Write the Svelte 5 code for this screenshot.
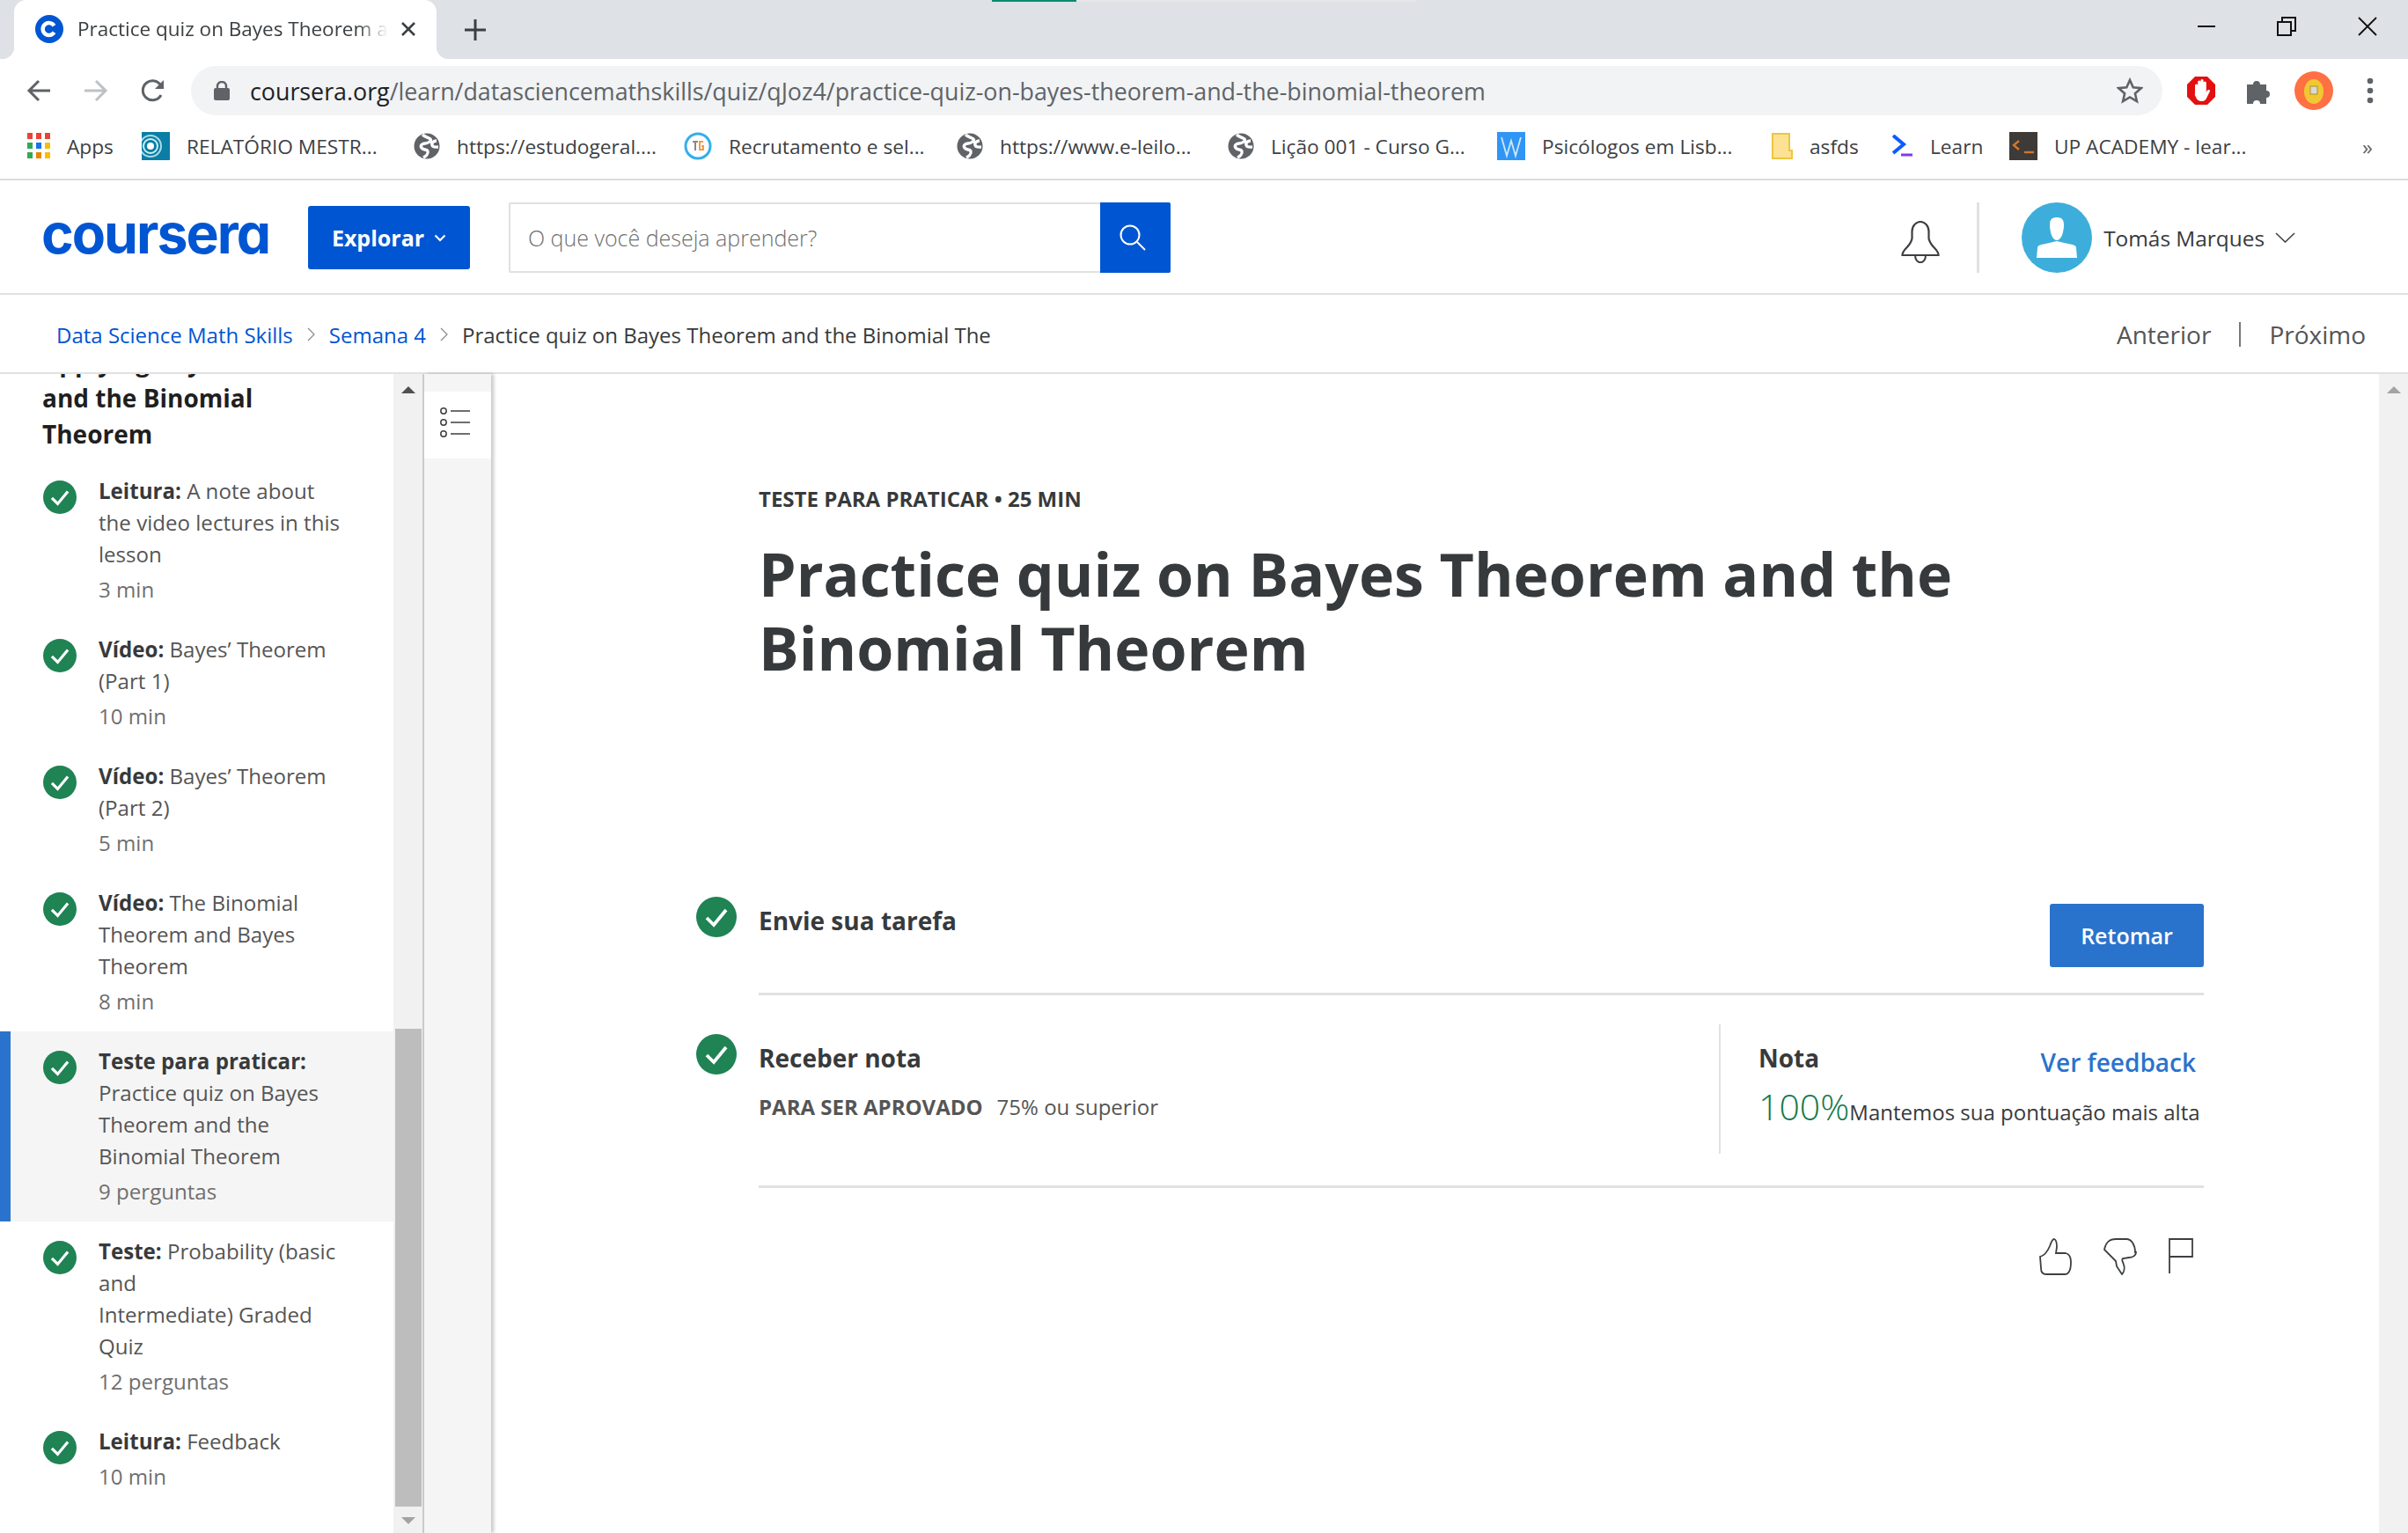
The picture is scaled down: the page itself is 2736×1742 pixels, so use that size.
<script lang="ts">
	const bookmarks = [
		{ label: 'Apps', icon: 'apps', width: 130 },
		{ label: 'RELATÓRIO MESTR...', icon: 'rel', width: 309 },
		{ label: 'https://estudogeral....', icon: 'globe', width: 307 },
		{ label: 'Recrutamento e sel...', icon: 'tg', width: 310 },
		{ label: 'https://www.e-leilo...', icon: 'globe', width: 308 },
		{ label: 'Lição 001 - Curso G...', icon: 'globe', width: 306 },
		{ label: 'Psicólogos em Lisb...', icon: 'w', width: 312 },
		{ label: 'asfds', icon: 'folder', width: 137 },
		{ label: 'Learn', icon: 'learn', width: 133 },
		{ label: 'UP ACADEMY - lear...', icon: 'up', width: 300 }
	];

	const lessons = [
		{ kind: 'Leitura:', lines: ['A note about', 'the video lectures in this', 'lesson'], meta: '3 min' },
		{ kind: 'Vídeo:', lines: ['Bayes’ Theorem', '(Part 1)'], meta: '10 min' },
		{ kind: 'Vídeo:', lines: ['Bayes’ Theorem', '(Part 2)'], meta: '5 min' },
		{ kind: 'Vídeo:', lines: ['The Binomial', 'Theorem and Bayes', 'Theorem'], meta: '8 min' },
		{ kind: 'Teste para praticar:', lines: ['', 'Practice quiz on Bayes', 'Theorem and the', 'Binomial Theorem'], meta: '9 perguntas', active: true },
		{ kind: 'Teste:', lines: ['Probability (basic', 'and', 'Intermediate) Graded', 'Quiz'], meta: '12 perguntas' },
		{ kind: 'Leitura:', lines: ['Feedback'], meta: '10 min' }
	];
</script>

{#snippet check(size)}
	<svg class="check" width={size} height={size} viewBox="0 0 46 46">
		<circle cx="23" cy="23" r="23" fill="#1f8354" />
		<path d="M12 24l8 8L34 15" fill="none" stroke="#fff" stroke-width="3.8" />
	</svg>
{/snippet}

{#snippet globe()}
	<svg width="30" height="30" viewBox="0 0 30 30">
		<circle cx="15" cy="15" r="14.5" fill="#5f6368" />
		<path d="M10 2c3 3 7 3 9 5s-3 5-6 5-6 2-4 5 6 1 7 4-3 6-5 7M26 9c-3 0-6 2-5 5s5 2 7 2" fill="none" stroke="#fff" stroke-width="3.4" />
	</svg>
{/snippet}

<div class="page">
	<div class="tabstrip">
		<div class="loadbar"><span></span></div>
		<div class="tab">
			<svg class="favicon" width="32" height="32" viewBox="0 0 32 32">
				<circle cx="16" cy="16" r="16" fill="#0056d2" />
				<path d="M21.5 12.2a7 7 0 1 0 0 7.6" fill="none" stroke="#fff" stroke-width="4.4" />
			</svg>
			<span class="tabtitle">Practice quiz on Bayes Theorem and the Binomial</span>
			<svg width="18" height="18" viewBox="0 0 18 18"><path d="M2 2l14 14M16 2L2 16" stroke="#3c4043" stroke-width="2.6" /></svg>
		</div>
		<svg class="newtab" width="24" height="24" viewBox="0 0 24 24"><path d="M12 0v24M0 12h24" stroke="#3c4043" stroke-width="3" /></svg>
		<div class="winctl">
			<svg width="20" height="20" viewBox="0 0 20 20"><path d="M0 10h20" stroke="#111" stroke-width="2" /></svg>
			<svg width="22" height="22" viewBox="0 0 22 22"><path d="M1 6h15v15H1zM6 6V1h15v15h-5" fill="none" stroke="#111" stroke-width="2" /></svg>
			<svg width="22" height="22" viewBox="0 0 22 22"><path d="M1 1l20 20M21 1L1 21" stroke="#111" stroke-width="1.8" /></svg>
		</div>
	</div>

	<div class="toolbar">
		<svg width="28" height="26" viewBox="0 0 28 26"><path d="M27 13H3M14 2L3 13l11 11" fill="none" stroke="#5f6368" stroke-width="3" /></svg>
		<svg width="28" height="26" viewBox="0 0 28 26"><path d="M1 13h24M14 2l11 11-11 11" fill="none" stroke="#bdc1c6" stroke-width="3" /></svg>
		<svg width="28" height="28" viewBox="0 0 28 28"><path d="M23 19a11 11 0 1 1 0-10.500" fill="none" stroke="#5f6368" stroke-width="3" /><path d="M26 2v10H16z" fill="#5f6368" /></svg>
		<div class="address">
			<svg width="18" height="22" viewBox="0 0 18 22"><path d="M4 9V6a5 5 0 0 1 10 0v3" fill="none" stroke="#5f6368" stroke-width="2.4" /><rect y="8" width="18" height="14" rx="2" fill="#5f6368" /></svg>
			<span class="url"><b>coursera.org</b>/learn/datasciencemathskills/quiz/qJoz4/practice-quiz-on-bayes-theorem-and-the-binomial-theorem</span>
			<svg class="star" width="30" height="30" viewBox="0 0 30 30"><path d="M15 3l3.700 8.300 9 .9-6.800 6 2 8.800L15 22.400 7.100 27l2-8.800-6.800-6 9-.9z" fill="none" stroke="#5f6368" stroke-width="2.600" /></svg>
		</div>
		<div class="exts">
			<svg width="34" height="34" viewBox="0 0 34 34">
				<path d="M10 1h14l9 9v14l-9 9H10l-9-9V10z" fill="#e31010" />
				<path d="M10 19v-8a1.600 1.600 0 0 1 3.200 0v5V7a1.600 1.600 0 0 1 3.200 0v9V5.500a1.600 1.600 0 0 1 3.200 0V16V8a1.600 1.600 0 0 1 3.200 0v11l1-2c1-2 4-1 3 1l-3 6c-1 3-3 5-6 5s-5-1-6-3l-2-4z" fill="#fff" />
			</svg>
			<svg width="30" height="30" viewBox="0 0 30 30"><path d="M2 8h7a4 4 0 1 1 8 0h7v7a4 4 0 1 1 0 8v7h-7a4 4 0 1 0-8 0H2z" fill="#5f6368" /></svg>
			<svg class="orange" width="44" height="44" viewBox="0 0 44 44">
				<circle cx="22" cy="22" r="22" fill="#ff7043" />
				<ellipse cx="22" cy="23" rx="11" ry="14" fill="#f2c832" />
				<rect x="18" y="17" width="8" height="9" fill="#d9d9d9" stroke="#a98f2e" />
			</svg>
			<svg width="8" height="30" viewBox="0 0 8 30"><circle cx="4" cy="4" r="3.300" fill="#5f6368" /><circle cx="4" cy="15" r="3.300" fill="#5f6368" /><circle cx="4" cy="26" r="3.300" fill="#5f6368" /></svg>
		</div>
	</div>

	<div class="bookmarks">
		{#each bookmarks as b (b.label)}
			<div class="bm" style="width:{b.width}px">
				<span class="bmicon">
					{#if b.icon === 'apps'}
						<svg width="26" height="30" viewBox="0 0 26 30">
							{#each ['#ea4335', '#ea4335', '#ea4335', '#34a853', '#1a73e8', '#fbbc04', '#34a853', '#ea8600', '#fbbc04'] as c, i}
								<rect x={(i % 3) * 10} y={Math.floor(i / 3) * 11} width="6" height="7" fill={c} />
							{/each}
						</svg>
					{:else if b.icon === 'rel'}
						<svg width="32" height="32" viewBox="0 0 32 32">
							<rect width="32" height="32" fill="#0a7ea4" />
							<circle cx="10" cy="16" r="12" fill="none" stroke="#a9dcea" stroke-width="2" />
							<circle cx="10" cy="16" r="8" fill="none" stroke="#cfeef5" stroke-width="2" />
							<circle cx="10" cy="16" r="4" fill="#fff" />
						</svg>
					{:else if b.icon === 'globe'}
						{@render globe()}
					{:else if b.icon === 'tg'}
						<svg width="32" height="32" viewBox="0 0 32 32">
							<circle cx="16" cy="16" r="14" fill="#fff" stroke="#35aeea" stroke-width="3" />
							<path d="M10 11h6M13 11v10" stroke="#888" stroke-width="2" /><path d="M22 11h-4v9h4v-4h-2" fill="none" stroke="#f09a4a" stroke-width="2" />
						</svg>
					{:else if b.icon === 'w'}
						<svg width="32" height="32" viewBox="0 0 32 32">
							<rect width="32" height="32" fill="#2f96f5" />
							<path d="M5 6l6 21 5-17 5 17 6-21" fill="none" stroke="#cfe6fb" stroke-width="1.800" />
						</svg>
					{:else if b.icon === 'folder'}
						<svg width="24" height="30" viewBox="0 0 24 30">
							<path d="M1 1h19v19h3v9H1z" fill="#fde293" stroke="#edc53f" stroke-width="2" />
						</svg>
					{:else if b.icon === 'learn'}
						<svg width="24" height="26" viewBox="0 0 24 26">
							<path d="M1 1l12 10L1 21" fill="none" stroke="#0b5cff" stroke-width="4" /><path d="M10 23h13" stroke="#7a3cf0" stroke-width="3" />
						</svg>
					{:else}
						<svg width="32" height="32" viewBox="0 0 32 32">
							<rect width="32" height="32" fill="#3d3a38" />
							<path d="M11 10l-6 5 6 5" fill="none" stroke="#d2762a" stroke-width="2.400" /><path d="M17 23h11" stroke="#d2762a" stroke-width="2.400" />
						</svg>
					{/if}
				</span>
				<span class="bmtext">{b.label}</span>
			</div>
		{/each}
		<span class="more">»</span>
	</div>

	<header class="topbar">
		<span class="logo">coursera</span>
		<button type="button" class="explore">Explorar
			<svg width="14" height="9" viewBox="0 0 14 9"><path d="M1.500 1.500L7 7l5.500-5.500" fill="none" stroke="#fff" stroke-width="2.200" /></svg>
		</button>
		<div class="search">
			<span class="placeholder">O que você deseja aprender?</span>
			<span class="searchbtn">
				<svg width="32" height="32" viewBox="0 0 32 32"><circle cx="13" cy="13" r="10.500" fill="none" stroke="#fff" stroke-width="2" /><path d="M21 21l9 9" stroke="#fff" stroke-width="2" /></svg>
			</span>
		</div>
		<div class="user">
			<svg class="bell" width="44" height="48" viewBox="0 0 44 48">
				<path d="M1.500 39c0-7 9-9 11-19V12a9.500 11 0 0 1 19 0v8c2 10 11 12 11 19z" fill="none" stroke="#3c4043" stroke-width="2.200" />
				<path d="M16 39c0 11 12 11 12 0" fill="none" stroke="#3c4043" stroke-width="2" />
			</svg>
			<span class="userdiv"></span>
			<svg class="avatar" width="80" height="80" viewBox="0 0 80 80">
				<circle cx="40" cy="40" r="40" fill="#3daedb" />
				<path d="M40 17c7 0 8 4 8 9s-2 17-8 17-8-12-8-17 1-9 8-9zM17 63l1-11c0-3 3-4 9-5l13-3 13 3c6 1 9 2 9 5l1 11z" fill="#fff" />
			</svg>
			<span class="username">Tomás Marques</span>
			<svg width="23" height="12" viewBox="0 0 23 12"><path d="M1 1l10.500 10L22 1" fill="none" stroke="#444" stroke-width="1.600" /></svg>
		</div>
	</header>

	<nav class="crumbs">
		<a href="#top">Data Science Math Skills</a>
		<svg width="9" height="18" viewBox="0 0 9 18"><path d="M1 2l7 7-7 7" fill="none" stroke="#888" stroke-width="1.200" /></svg>
		<a href="#top">Semana 4</a>
		<svg width="9" height="18" viewBox="0 0 9 18"><path d="M1 2l7 7-7 7" fill="none" stroke="#888" stroke-width="1.200" /></svg>
		<span class="current">Practice quiz on Bayes Theorem and the Binomial The</span>
		<div class="pager">
			<span>Anterior</span>
			<i></i>
			<span>Próximo</span>
		</div>
	</nav>

	<div class="body">
		<aside class="sidebar">
			<div class="sidelist">
				<h3>Applying Bayes<br />and the Binomial<br />Theorem</h3>
				{#each lessons as l}
					<div class="lesson" class:active={l.active}>
						{@render check(38)}
						<div class="lessontext">
							<p><b>{l.kind}</b>
								{#each l.lines as line, i}{#if i > 0}<br />{/if}{line}{/each}
							</p>
							<p class="meta">{l.meta}</p>
						</div>
					</div>
				{/each}
			</div>
		</aside>
		<div class="scrollbar side">
			<span class="arrow up dark"></span>
			<span class="thumb"></span>
			<span class="arrow down"></span>
		</div>
		<div class="rail">
			<div class="railbtn">
				<svg width="36" height="36" viewBox="0 0 36 36">
					<g fill="none" stroke="#3c4043" stroke-width="1.500">
						<circle cx="4" cy="5" r="3.200" /><circle cx="4" cy="18" r="3.200" /><circle cx="4" cy="31" r="3.200" />
						<path d="M12 5h22M12 18h22M12 31h22" />
					</g>
				</svg>
			</div>
		</div>
		<main class="content">
			<div class="eyebrow">TESTE PARA PRATICAR • 25 MIN</div>
			<h1>Practice quiz on Bayes Theorem and the<br />Binomial Theorem</h1>

			<section class="step first">
				{@render check(46)}
				<div class="stepbody">
					<h2>Envie sua tarefa</h2>
					<button type="button" class="resume">Retomar</button>
				</div>
			</section>

			<section class="step second">
				{@render check(46)}
				<div class="stepbody">
					<div class="grade-left">
						<h2>Receber nota</h2>
						<p class="pass"><b>PARA SER APROVADO</b><span>75% ou superior</span></p>
					</div>
					<div class="grade">
						<div class="graderow top">
							<h2>Nota</h2>
							<a href="#top">Ver feedback</a>
						</div>
						<div class="graderow score">
							<span class="pct">100%</span>
							<span class="keep">Mantemos sua pontuação mais alta</span>
						</div>
					</div>
				</div>
			</section>

			<div class="actions">
				<svg width="38" height="42" viewBox="0 0 38 42"><path d="M2 21c4-1 8-5 11-12 1-3 3-8 5-8 3 1 3 6 3 9l-1 7h11c4 1 6 5 6 10 0 6-1 14-7 14H9c-4 0-6-2-6-7z" fill="none" stroke="#3c4043" stroke-width="1.800" /></svg>
				<svg width="38" height="42" viewBox="0 0 38 42"><path d="M36 16c0-8-4-15-10-15H14C8 1 3 3 1 13l13 13 1 6 6 9c3-3 3-8 2-11-1-4-3-5-1-7l7-1c5 0 8-3 8-6z" fill="none" stroke="#3c4043" stroke-width="1.800" /></svg>
				<svg width="28" height="40" viewBox="0 0 28 40"><path d="M1 40V1h26v20H1" fill="none" stroke="#3c4043" stroke-width="1.800" /></svg>
			</div>
		</main>
		<div class="scrollbar page-bar">
			<span class="arrow up"></span>
		</div>
	</div>
</div>

<style>
	:global(body) {
		margin: 0;
		background: #fff;
	}

	.page {
		position: relative;
		width: 2736px;
		height: 1742px;
		overflow: hidden;
		display: flex;
		flex-direction: column;
		font-family: 'Open Sans', 'Noto Sans', sans-serif;
		color: #373a3c;
	}

	svg {
		display: block;
		flex: none;
	}

	/* browser chrome */
	.tabstrip {
		position: relative;
		flex: none;
		height: 67px;
		background: #dee1e6;
		display: flex;
		align-items: center;
	}

	.loadbar {
		position: absolute;
		top: 0;
		left: 1127px;
		width: 482px;
		height: 2px;
		background: #e6e6e6;
	}

	.loadbar span {
		display: block;
		width: 96px;
		height: 100%;
		background: #0a8a70;
	}

	.tab {
		position: relative;
		box-sizing: border-box;
		align-self: stretch;
		width: 480px;
		margin-left: 16px;
		padding: 0 23px 2px 24px;
		display: flex;
		align-items: center;
		background: #fff;
		border-radius: 14px 14px 0 0;
	}

	.tab::before,
	.tab::after {
		content: '';
		position: absolute;
		bottom: 0;
		width: 14px;
		height: 14px;
	}

	.tab::before {
		left: -14px;
		background: radial-gradient(circle at 0 0, transparent 14px, #fff 14.500px);
	}

	.tab::after {
		right: -14px;
		background: radial-gradient(circle at 100% 0, transparent 14px, #fff 14.500px);
	}

	.tabtitle {
		flex: 1;
		min-width: 0;
		margin: 0 14px 0 16px;
		font-size: 22.500px;
		color: #3c4043;
		white-space: nowrap;
		overflow: hidden;
		-webkit-mask-image: linear-gradient(90deg, #000 90%, transparent 100%);
		mask-image: linear-gradient(90deg, #000 90%, transparent 100%);
	}

	.newtab {
		margin-left: 32px;
	}

	.winctl {
		margin-left: auto;
		margin-right: 35px;
		display: flex;
		align-items: center;
		gap: 70px;
		padding-bottom: 7px;
	}

	.toolbar {
		flex: none;
		height: 72px;
		box-sizing: border-box;
		padding-left: 30px;
		display: flex;
		align-items: center;
		gap: 37px;
	}

	.address {
		box-sizing: border-box;
		width: 2240px;
		height: 56px;
		margin-left: -8px;
		padding: 0 22px 0 26px;
		display: flex;
		align-items: center;
		background: #f1f3f4;
		border-radius: 28px;
	}

	.url {
		margin-left: 23px;
		font-size: 26.800px;
		color: #5f6368;
		white-space: nowrap;
	}

	.url b {
		font-weight: 400;
		color: #202124;
	}

	.star {
		margin-left: auto;
	}

	.exts {
		margin-left: -10px;
		display: flex;
		align-items: center;
		gap: 33px;
	}

	.orange {
		margin: 0 5px 0 -7px;
	}

	.bookmarks {
		flex: none;
		box-sizing: border-box;
		height: 66px;
		padding: 0 0 10px 31px;
		display: flex;
		align-items: center;
		border-bottom: 2px solid #dadce0;
	}

	.bm {
		flex: none;
		display: flex;
		align-items: center;
		gap: 19px;
		font-size: 22.700px;
		color: #3c4043;
		white-space: nowrap;
	}

	.more {
		margin-left: 101px;
		font-size: 24px;
		color: #5f6368;
	}

	/* coursera header */
	.topbar {
		flex: none;
		box-sizing: border-box;
		height: 130px;
		padding: 2px 0 0 47px;
		display: flex;
		align-items: center;
		border-bottom: 2px solid #e1e1e1;
	}

	.logo {
		width: 255px;
		font-family: Inter, sans-serif;
		font-size: 62.500px;
		font-weight: 700;
		font-feature-settings: 'cv11';
		letter-spacing: -2px;
		line-height: 1;
		color: #0056d2;
		padding-bottom: 10px;
	}

	.explore {
		box-sizing: border-box;
		width: 184px;
		height: 72px;
		margin-left: 48px;
		display: flex;
		align-items: center;
		justify-content: center;
		gap: 11px;
		border: 0;
		border-radius: 3px;
		background: #0056d2;
		color: #fff;
		font-family: inherit;
		font-size: 25px;
		font-weight: 700;
	}

	.search {
		box-sizing: border-box;
		width: 752px;
		height: 80px;
		margin-left: 44px;
		display: flex;
		align-items: center;
		justify-content: space-between;
		border: 2px solid #e1e1e1;
		border-right: 0;
		border-radius: 2px;
	}

	.placeholder {
		margin-left: 20px;
		font-size: 25px;
		font-weight: 300;
		color: #6f6f6f;
	}

	.searchbtn {
		box-sizing: border-box;
		width: 80px;
		height: 80px;
		margin: -2px 0;
		padding-right: 6px;
		display: flex;
		align-items: center;
		justify-content: center;
		background: #0056d2;
		border-radius: 0 2px 2px 0;
	}

	.user {
		margin-left: auto;
		padding-right: 128px;
		display: flex;
		align-items: center;
	}

	.bell {
		margin-top: 10px;
	}

	.userdiv {
		width: 3px;
		height: 80px;
		margin: 0 48px 0 42px;
		background: #e1e1e1;
	}

	.username {
		margin: 0 12px 0 13px;
		font-size: 24.400px;
		color: #373a3c;
	}

	.crumbs {
		flex: none;
		box-sizing: border-box;
		height: 90px;
		padding: 2px 48px 0 64px;
		display: flex;
		align-items: center;
		gap: 16px;
		font-size: 24px;
		border-bottom: 2px solid #e1e1e1;
	}

	.crumbs a {
		color: #0056d2;
		text-decoration: none;
	}

	.current {
		color: #373a3c;
	}

	.pager {
		margin-left: auto;
		display: flex;
		align-items: center;
		font-size: 28px;
		color: #555;
	}

	.pager i {
		width: 2px;
		height: 28px;
		margin: 0 32px;
		background: #777;
	}

	/* page body */
	.body {
		flex: 1;
		min-height: 0;
		display: flex;
	}

	.sidebar {
		flex: none;
		width: 447px;
		overflow: hidden;
	}

	.sidelist {
		margin-top: -34px;
	}

	.sidelist h3 {
		margin: 0 0 10px;
		padding-left: 48px;
		font-size: 28px;
		line-height: 41px;
		font-weight: 700;
		color: #1f1f1f;
	}

	.lesson {
		box-sizing: border-box;
		padding: 16px 24px 16px 49px;
		display: flex;
		align-items: flex-start;
		gap: 25px;
		font-size: 24.100px;
		line-height: 36px;
		color: #555;
	}

	.lesson.active {
		padding-left: 37px;
		background: #f5f5f5;
		border-left: 12px solid #2a73cc;
	}

	.check {
		margin-top: 6px;
	}

	.lesson p {
		margin: 0;
	}

	.lesson b {
		font-weight: 700;
		color: #373a3c;
	}

	.meta {
		margin-top: 4px !important;
		color: #6f6f6f;
	}

	.scrollbar {
		flex: none;
		box-sizing: border-box;
		width: 33px;
		display: flex;
		flex-direction: column;
		align-items: center;
		background: #f1f1f1;
	}

	.scrollbar.side {
		width: 35px;
		border-right: 2px solid #ccc;
	}

	.thumb {
		width: 30px;
		height: 543px;
		margin-top: 722px;
		background: #bdbdbd;
	}

	.arrow {
		width: 0;
		height: 0;
		border-left: 8px solid transparent;
		border-right: 8px solid transparent;
	}

	.arrow.up {
		margin-top: 14px;
		border-bottom: 8px solid #a3a3a3;
	}

	.arrow.up.dark {
		border-bottom-color: #505050;
	}

	.arrow.down {
		margin-top: 12px;
		border-top: 8px solid #a3a3a3;
	}

	.rail {
		flex: none;
		width: 76px;
		background: #f5f5f5;
		box-shadow: 3px 0 4px rgba(0, 0, 0, 0.22);
		padding-top: 20px;
		box-sizing: border-box;
	}

	.railbtn {
		height: 76px;
		padding: 0 4px 6px 0;
		box-sizing: border-box;
		display: flex;
		align-items: center;
		justify-content: center;
		background: #fff;
	}

	.content {
		flex: 1;
		min-width: 0;
		box-sizing: border-box;
		padding: 126px 199px 0 233px;
	}

	.eyebrow {
		margin-left: 71px;
		font-size: 24px;
		line-height: 32px;
		font-weight: 700;
		color: #373a3c;
	}

	h1 {
		margin: 27px 0 0 71px;
		font-size: 68px;
		line-height: 84px;
		font-weight: 700;
		color: #373a3c;
		white-space: nowrap;
	}

	h2 {
		margin: 0;
		font-size: 28px;
		line-height: 40px;
		font-weight: 700;
		color: #373a3c;
	}

	.step {
		display: flex;
		gap: 25px;
	}

	.step .check {
		margin-top: 0;
	}

	.step.first {
		margin-top: 241px;
	}

	.stepbody {
		flex: 1;
		min-width: 0;
		display: flex;
		justify-content: space-between;
		border-bottom: 3px solid #e1e1e1;
	}

	.step.first .stepbody {
		height: 112px;
		padding-top: 7px;
		box-sizing: border-box;
	}

	.step.first h2 {
		margin-top: 0;
	}

	.resume {
		width: 175px;
		height: 72px;
		margin-top: 1px;
		border: 0;
		border-radius: 3px;
		background: #2a73cc;
		color: #fff;
		font-family: inherit;
		font-size: 25px;
		font-weight: 600;
	}

	.step.second {
		margin-top: 44px;
	}

	.step.second .stepbody {
		height: 186px;
		box-sizing: border-box;
		margin-top: -11px;
		padding-top: 0;
	}

	.grade-left {
		padding-top: 18px;
	}

	.pass {
		margin: 18px 0 0;
		font-size: 24px;
		line-height: 36px;
		color: #555;
	}

	.pass b {
		margin-right: 16px;
	}

	.pass span {
		font-weight: 400;
		color: #555;
	}

	.grade {
		box-sizing: border-box;
		width: 551px;
		height: 147px;
		padding: 18px 9px 0 43px;
		border-left: 2px solid #e1e1e1;
		margin-top: 0;
	}

	.graderow {
		display: flex;
		justify-content: space-between;
	}

	.graderow a {
		margin-top: 5px;
		font-size: 28px;
		line-height: 40px;
		font-weight: 600;
		color: #2a73cc;
		text-decoration: none;
	}

	.score {
		margin-top: 2px;
		align-items: baseline;
		white-space: nowrap;
	}

	.pct {
		font-size: 41px;
		font-weight: 300;
		color: #127a4a;
	}

	.keep {
		font-size: 24px;
		color: #373a3c;
	}

	.actions {
		margin-top: 57px;
		display: flex;
		justify-content: flex-end;
		gap: 36px;
		padding-right: 12px;
	}
</style>
